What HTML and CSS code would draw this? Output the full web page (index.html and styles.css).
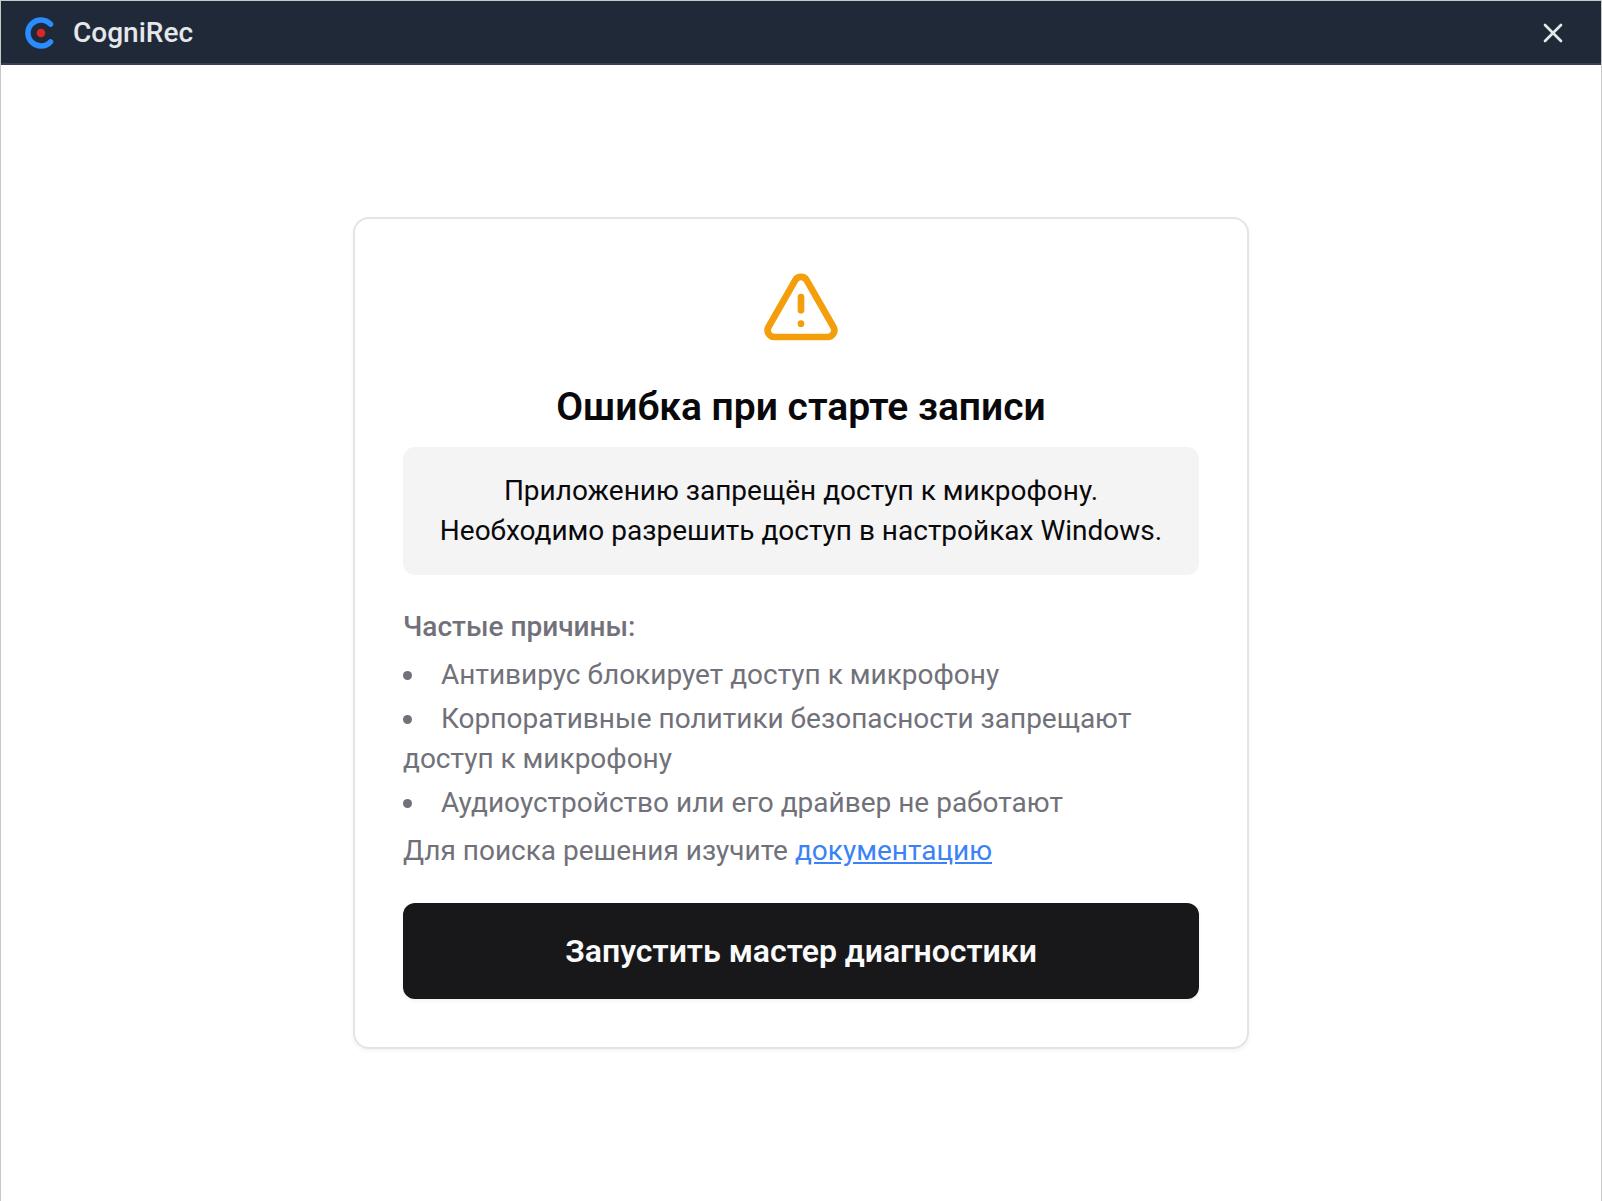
FILE: index.html
```html
<!DOCTYPE html>
<html lang="ru">
<head>
  <meta charset="UTF-8">
  <meta name="viewport" content="width=device-width, initial-scale=1.0">
  <title>CogniRec</title>
  <link rel="stylesheet" href="styles.css">
</head>
<body>
  <div class="window">
    <header class="titlebar">
      <div class="brand">
        <svg class="brand__logo" viewBox="0 0 32 32" aria-hidden="true">
          <path d="M25.500 7.200A13 13 0 1 0 25.500 24.800" fill="none" stroke="#2b8cff" stroke-width="5.500" stroke-linecap="round"/>
          <circle cx="16" cy="16" r="4.300" fill="#dc2626"/>
        </svg>
        <span class="brand__name">CogniRec</span>
      </div>
      <button class="close" type="button" aria-label="Закрыть">
        <svg class="close__icon" viewBox="0 0 24 24" aria-hidden="true">
          <path d="M18 6 6 18M6 6l12 12"/>
        </svg>
      </button>
    </header>
    <main class="content">
      <section class="card">
        <svg class="card__icon" viewBox="0 0 24 24" aria-hidden="true">
          <path d="m21.73 18-8-14a2 2 0 0 0-3.480 0l-8 14A2 2 0 0 0 4 21h16a2 2 0 0 0 1.730-3"/>
          <path d="M12 9v4"/>
          <path d="M12 17h.01"/>
        </svg>
        <h1 class="card__title">Ошибка при старте записи</h1>
        <p class="message">Приложению запрещён доступ к микрофону. Необходимо разрешить доступ в настройках Windows.</p>
        <div class="reasons">
          <p class="reasons__title">Частые причины:</p>
          <ul class="reasons__list">
            <li>Антивирус блокирует доступ к микрофону</li>
            <li>Корпоративные политики безопасности запрещают доступ к микрофону</li>
            <li>Аудиоустройство или его драйвер не работают</li>
          </ul>
          <p>Для поиска решения изучите <a class="link" href="#">документацию</a></p>
        </div>
        <button class="btn" type="button">Запустить мастер диагностики</button>
      </section>
    </main>
  </div>
</body>
</html>
```
FILE: styles.css
```css
* {
  box-sizing: border-box;
}
body {
  margin: 0;
  font-family: Roboto, "Liberation Sans", sans-serif;
  font-size: 28px;
  line-height: 40px;
  color: #09090b;
  background-color: #fff;
}
h1, p, ul {
  margin: 0;
  padding: 0;
}
.window {
  display: flex;
  flex-direction: column;
  min-height: 100vh;
  border: 1px solid #c8c8c8;
  border-bottom: none;
}
.titlebar {
  display: flex;
  align-items: center;
  justify-content: space-between;
  height: 64px;
  padding: 2px 24px 0;
  background-color: #1f2937;
  border-bottom: 2px solid #374151;
}
.brand {
  display: flex;
  align-items: center;
  gap: 16px;
}
.brand__logo {
  width: 32px;
  height: 32px;
}
.brand__name {
  font-weight: 500;
  color: #e5e7eb;
}
.close {
  display: flex;
  padding: 8px;
  border: none;
  background: none;
  color: #e5e7eb;
  cursor: pointer;
}
.close__icon {
  width: 32px;
  height: 32px;
  fill: none;
  stroke: currentColor;
  stroke-width: 2;
  stroke-linecap: round;
}
.content {
  flex: 1;
  display: flex;
  align-items: center;
  justify-content: center;
}
.card {
  display: flex;
  flex-direction: column;
  width: 100%;
  max-width: 896px;
  padding: 48px;
  border: 2px solid #e4e4e7;
  border-radius: 16px;
  box-shadow: 0 2px 4px rgba(0,0,0, 0.05);
}
.card__icon {
  align-self: center;
  width: 80px;
  height: 80px;
  margin-bottom: 32px;
  fill: none;
  stroke: #f59e0b;
  stroke-width: 2;
  stroke-linecap: round;
  stroke-linejoin: round;
}
.card__title {
  font-size: 39px;
  font-weight: 600;
  line-height: 56px;
  text-align: center;
  margin-bottom: 12px;
}
.message {
  padding: 24px;
  border-radius: 12px;
  text-align: center;
  background-color: #f4f4f5;
}
.reasons {
  margin: 32px 0;
  color: #71717a;
}
.reasons__title {
  font-weight: 500;
}
.reasons__list {
  margin: 8px 0;
  list-style: disc inside;
}
.reasons__list li + li {
  margin-top: 4px;
}
.link {
  color: #3b82f6;
}
.btn {
  padding: 28px 32px;
  border: none;
  border-radius: 12px;
  font-family: inherit;
  font-size: 32px;
  font-weight: 600;
  line-height: 40px;
  color: #fafafa;
  background-color: #18181b;
  box-shadow: 0 2px 4px rgba(0,0,0, 0.05);
  cursor: pointer;
}
```
